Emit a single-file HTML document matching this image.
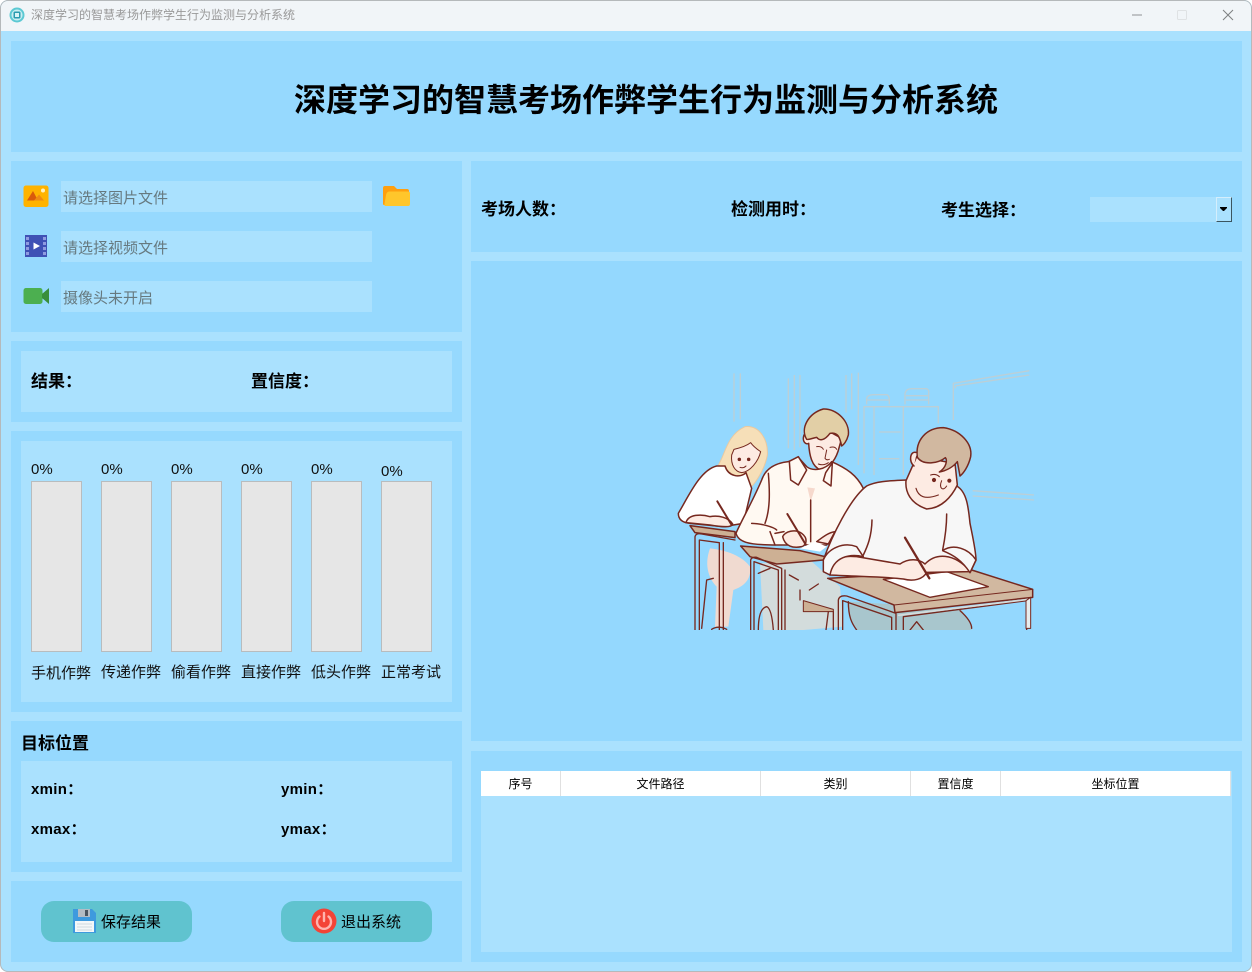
<!DOCTYPE html>
<html lang="zh"><head><meta charset="utf-8"><title>深度学习的智慧考场作弊学生行为监测与分析系统</title>
<style>
html,body{margin:0;padding:0;background:#fff}
body{width:1252px;height:972px;position:relative;overflow:hidden;font-family:"Liberation Sans","Noto Sans CJK SC",sans-serif;color:#000}
#win{position:absolute;left:0;top:0;width:1252px;height:972px;background:#aae1fe;border-radius:8px;overflow:hidden;box-shadow:inset 0 0 0 1px #b5b9bb}
.a{position:absolute}
.p{position:absolute;background:#96d9fe}
.l{position:absolute;background:#aae1fe}
.t{position:absolute;white-space:nowrap;line-height:20px}
.b{font-weight:bold;font-size:17px}
.ph{font-size:15px;color:#66797f}
.bar{position:absolute;top:481px;width:49px;height:169px;background:#e6e6e6;border:1px solid #b8bcbe}
.pct{font-size:15px;color:#111}
.lab{font-size:15px;top:662px;color:#111}
.btn{position:absolute;top:901px;width:151px;height:41px;background:#60c3cf;border-radius:13px}
.th{position:absolute;top:771px;height:25px;line-height:26px;font-size:12px;text-align:center;background:#fff;border-right:1px solid #e0e0e0;box-sizing:border-box}
.x{font-size:15px;font-weight:bold;letter-spacing:.3px}
</style></head><body>
<div id="win">
<div class="a" style="left:1px;top:1px;width:1250px;height:30px;background:#f1f5f8;border-radius:7px 7px 0 0"></div>
<svg class="a" style="left:9px;top:7px" width="16" height="16" viewBox="0 0 16 16"><circle cx="8" cy="8" r="7.500" fill="#5cc9d3"/><circle cx="8" cy="8" r="5.500" fill="#c9eef2"/><rect x="4.500" y="4.500" width="7" height="7" rx="1.500" fill="#2a9bb0"/><rect x="6" y="6" width="4" height="4" fill="#d8f3f6"/></svg>
<div class="t" style="left:31px;top:5px;font-size:12px;color:#999">深度学习的智慧考场作弊学生行为监测与分析系统</div>
<svg class="a" style="left:1125px;top:6px" width="115" height="18" viewBox="0 0 115 18"><path d="M7 9H17" stroke="#8e9193" stroke-width="1"/><rect x="52.500" y="4.500" width="9" height="9" rx="1" fill="none" stroke="#dfe2e4"/><path d="M98 4L108 14M108 4L98 14" stroke="#7d8082" stroke-width="1" fill="none"/></svg>

<div class="p" style="left:11px;top:41px;width:1231px;height:111px"></div>
<div class="t" style="left:294px;top:78px;font-size:32px;line-height:44px;font-weight:bold">深度学习的智慧考场作弊学生行为监测与分析系统</div>

<div class="p" style="left:11px;top:161px;width:451px;height:171px"></div>
<div class="l" style="left:61px;top:181px;width:311px;height:31px"></div>
<div class="l" style="left:61px;top:231px;width:311px;height:31px"></div>
<div class="l" style="left:61px;top:281px;width:311px;height:31px"></div>
<div class="t ph" style="left:63px;top:189px">请选择图片文件</div>
<div class="t ph" style="left:63px;top:239px">请选择视频文件</div>
<div class="t ph" style="left:63px;top:289px">摄像头未开启</div>
<svg class="a" style="left:23px;top:185px" width="26" height="23" viewBox="0 0 26 23"><rect x="0.500" y="0.500" width="25" height="21.500" rx="2.500" fill="#ffb300"/><path d="M4 15.500L10 6L15 15.500Z" fill="#d95a0b"/><path d="M11 15.500L16 9.500L21 15.500Z" fill="#ee8a14"/><circle cx="20" cy="5.500" r="2" fill="#fff3c0"/></svg>
<svg class="a" style="left:25px;top:235px" width="22" height="22" viewBox="0 0 22 22"><rect width="22" height="22" fill="#3f51b5"/><path d="M1 2h3v3H1zM1 7h3v3H1zM1 12h3v3H1zM1 17h3v3H1zM18 2h3v3h-3zM18 7h3v3h-3zM18 12h3v3h-3zM18 17h3v3h-3z" fill="#8f9be0"/><path d="M8.500 7.500L15 11L8.500 14.500Z" fill="#fff"/></svg>
<svg class="a" style="left:23px;top:287px" width="27" height="18" viewBox="0 0 27 18"><rect x="0.500" y="1" width="19" height="16" rx="2.500" fill="#4caf50"/><path d="M19 7L26 1V17L19 11Z" fill="#388e3c"/></svg>
<svg class="a" style="left:383px;top:185px" width="28" height="22" viewBox="0 0 28 22"><path d="M0 3Q0 1 2 1H11L14 4H24Q26 4 26 6V20H1Q0 20 0 19Z" fill="#ff9f0f"/><path d="M2.500 21Q1 21 1.500 19L3 10Q3.500 7 6 6.500H25Q27.500 6.500 27 9.500V19Q27 21 25 21Z" fill="#ffc62b"/></svg>

<div class="p" style="left:11px;top:341px;width:451px;height:81px"></div>
<div class="l" style="left:21px;top:351px;width:431px;height:61px"></div>
<div class="t b" style="left:31px;top:372px">结果：</div>
<div class="t b" style="left:251px;top:372px">置信度：</div>

<div class="p" style="left:11px;top:431px;width:451px;height:281px"></div>
<div class="l" style="left:21px;top:441px;width:431px;height:261px"></div>
<div class="bar" style="left:31px"></div><div class="bar" style="left:101px"></div><div class="bar" style="left:171px"></div><div class="bar" style="left:241px"></div><div class="bar" style="left:311px"></div><div class="bar" style="left:381px"></div>
<div class="t pct" style="left:31px;top:460px">0%</div><div class="t pct" style="left:101px;top:460px">0%</div><div class="t pct" style="left:171px;top:460px">0%</div><div class="t pct" style="left:241px;top:460px">0%</div><div class="t pct" style="left:311px;top:460px">0%</div><div class="t pct" style="left:381px;top:462px">0%</div>
<div class="t lab" style="left:31px;top:664px">手机作弊</div><div class="t lab" style="left:101px;top:663px">传递作弊</div><div class="t lab" style="left:171px;top:663px">偷看作弊</div><div class="t lab" style="left:241px;top:663px">直接作弊</div><div class="t lab" style="left:311px;top:663px">低头作弊</div><div class="t lab" style="left:381px;top:663px">正常考试</div>

<div class="p" style="left:11px;top:721px;width:451px;height:151px"></div>
<div class="l" style="left:21px;top:761px;width:431px;height:101px"></div>
<div class="t" style="left:21px;top:734px;font-size:17px;font-weight:bold">目标位置</div>
<div class="t x" style="left:31px;top:780px">xmin：</div>
<div class="t x" style="left:281px;top:780px">ymin：</div>
<div class="t x" style="left:31px;top:820px">xmax：</div>
<div class="t x" style="left:281px;top:820px">ymax：</div>

<div class="p" style="left:11px;top:881px;width:451px;height:81px"></div>
<div class="btn" style="left:41px"></div><div class="btn" style="left:281px"></div>
<svg class="a" style="left:73px;top:909px" width="23" height="24" viewBox="0 0 23 24"><path d="M0 0H19L23 4V24H0Z" fill="#3e9ade"/><rect x="5" y="0" width="12" height="8" fill="#b4bcc4"/><rect x="12" y="1" width="3" height="6" fill="#4a5560"/><rect x="2" y="12" width="19" height="11" fill="#f4f7f9"/><path d="M4 15H19M4 18H19M4 21H19" stroke="#cfd8de"/></svg>
<svg class="a" style="left:311px;top:908px" width="26" height="26" viewBox="0 0 26 26"><circle cx="13" cy="13" r="12.500" fill="#f44336"/><path d="M8.500 8.500A7 7 0 1 0 17.500 8.500" fill="none" stroke="#ffb3ae" stroke-width="2.400" stroke-linecap="round"/><path d="M13 5V13" stroke="#ffb3ae" stroke-width="2.400" stroke-linecap="round"/></svg>
<div class="t" style="left:101px;top:913px;font-size:15px">保存结果</div>
<div class="t" style="left:341px;top:913px;font-size:15px">退出系统</div>

<div class="p" style="left:471px;top:161px;width:771px;height:91px"></div>
<div class="t b" style="left:481px;top:200px">考场人数：</div>
<div class="t b" style="left:731px;top:200px">检测用时：</div>
<div class="t b" style="left:941px;top:201px">考生选择：</div>
<div class="l" style="left:1090px;top:197px;width:142px;height:25px"></div>
<div class="a" style="left:1216px;top:197px;width:16px;height:25px;box-sizing:border-box;border:1px solid #d4eefc;border-right:1px solid #3a5560;border-bottom:1px solid #3a5560;background:#aae1fe"></div>
<svg class="a" style="left:1220px;top:207px" width="8" height="5" viewBox="0 0 8 5"><path d="M0 0H7V1L4 4H3L0 1Z" fill="#000"/></svg>

<div class="p" style="left:471px;top:261px;width:771px;height:480px;background:#94d8fe"></div>
<svg class="a" style="left:660px;top:360px" width="390" height="280" viewBox="0 0 1170 840">
<defs><clipPath id="c"><rect x="0" y="0" width="1170" height="810"/></clipPath></defs>
<g clip-path="url(#c)">
<g fill="none" stroke="#bccfd6" stroke-width="4">
<path d="M222 40V185M241 40V178M385 55V265M403 45V270M420 45V262M558 45V158M575 40V148M595 38V315"/>
<path d="M612 340V140H835V190M642 345V140M730 345V140M657 216H722M657 296H718"/>
<path d="M620 133V115Q622 105 640 104H680Q688 106 688 120V133M622 120H688M735 133V100Q738 86 755 86H800Q808 90 806 100V133M738 107H806M738 120H806"/>
<path d="M880 180V70L1108 32M886 85V78L1108 45"/>
<path d="M938 392L1122 405M938 408L1122 420"/>
</g>
<g stroke="#76281f" stroke-width="4.500" stroke-linejoin="round" stroke-linecap="round">
<!-- woman -->
<path d="M175 315C195 285 200 225 255 200C295 195 325 235 322 285C315 325 290 365 270 385L200 330Z" fill="#f6dfb8" stroke="#e9c9a0" stroke-width="3"/>
<path d="M222 268C240 264 262 256 272 248C282 262 295 270 302 275C295 305 270 335 245 338C225 335 212 315 215 285Z" fill="#fdebe3" stroke-width="3"/>
<path d="M170 318C120 330 85 410 55 460C55 480 70 488 90 490L190 500L250 490L275 385L258 338C240 355 205 350 195 318Z" fill="#fff"/>
<path d="M78 488C85 462 125 462 150 470C175 465 205 472 218 492C215 505 180 500 150 495Z" fill="#fdebe3"/>
<path d="M172 424L215 495" stroke-width="6"/>
<circle cx="238" cy="298" r="3" fill="#76281f"/><circle cx="266" cy="298" r="3" fill="#76281f"/>
<path d="M240 322Q250 326 258 318" fill="none" stroke-width="3"/>
<path d="M150 565C130 620 150 660 170 680L165 800H205L220 690C250 680 275 660 270 620C250 590 200 570 150 565Z" fill="#f0dad0" stroke="none"/>
<path d="M90 497L225 515V533L105 518Z" fill="#cdb094"/>
<path d="M105 810V530Q108 518 125 522L225 540M118 810V540L178 548V810M190 548V810" fill="none" stroke-width="4"/>
<path d="M125 805L140 660L160 655" fill="none" stroke-width="4"/>
<path d="M155 808Q175 795 200 808" fill="none" stroke-width="4"/>
<!-- man 2 -->
<path d="M432 225C425 245 438 255 446 250C448 285 455 320 482 330C510 325 530 295 538 260L545 235L490 205Z" fill="#fdebe3"/>
<path d="M440 238C420 205 445 160 490 147C530 145 570 185 565 225C560 245 550 255 545 258C540 235 535 215 510 220C495 240 480 245 470 232C455 235 445 240 440 238Z" fill="#e2cfa6"/>
<path d="M470 260Q485 258 490 268M510 262Q525 258 530 268M500 270L495 295Q500 302 508 298M475 312Q490 318 505 308" fill="none" stroke-width="3"/>
<path d="M385 305C340 310 315 330 305 360C280 420 240 490 228 520C235 545 260 555 350 555L500 555L610 385C590 345 560 325 515 305C495 330 460 335 440 320L415 292Z" fill="#fff9f2"/>
<path d="M415 290L388 304L392 360L415 375L440 330ZM517 308L513 378L490 362L497 338Z" fill="#fff9f2"/>
<path d="M442 382L465 385L452 425Z" fill="#f6d9cd" stroke="none"/>
<path d="M452 420V545M325 340C330 400 330 450 315 490M275 490C300 490 340 500 350 510" fill="none"/>
<path d="M330 515L345 555M372 515L345 520" fill="none"/>
<path d="M368 530C375 515 405 505 425 520C445 535 440 555 425 560C400 565 375 560 368 530Z" fill="#fdebe3"/>
<path d="M470 545C490 530 505 518 525 515L505 552Z" fill="#fdebe3"/>
<path d="M382 462L438 555" stroke-width="6"/>
<path d="M420 565L465 545L500 560L480 575Z" fill="#fff" stroke="none"/>
<path d="M300 610L310 810H405L430 810L550 800L540 680L450 600Z" fill="#d3dcdc" stroke="none"/>
<path d="M242 558L420 572L495 590L490 600L350 612L270 590Z" fill="#cdb094"/>
<path d="M272 810V600Q275 590 290 592L365 625V810M282 810V605L355 630V810" fill="none" stroke-width="4"/>
<path d="M375 810V630M295 640L330 625" fill="none" stroke-width="4"/>
<path d="M388 645L415 660M448 690L475 672M420 690V720" fill="none" stroke-width="4"/>
<path d="M430 722L520 748V755L430 755Z" fill="#cdb094" stroke-width="3"/>
<path d="M505 755L498 810M520 755V810M295 810Q295 745 320 740Q335 745 340 810" fill="none" stroke-width="4"/>
<!-- man 3 -->
<path d="M565 725C565 770 575 790 590 810H935C930 785 915 760 900 745Z" fill="#a8c6cd" stroke="none"/>
<path d="M565 725C565 770 575 790 590 810M900 752C920 770 935 790 935 805M750 810L770 785L790 810" fill="none" stroke-width="4"/>
<path d="M490 600C515 530 570 415 620 378C650 362 700 362 738 360L890 378C920 395 925 440 930 490C940 540 948 575 948 600L930 638L610 620Z" fill="#f7f7f7"/>
<path d="M738 362C735 395 750 430 800 447C845 445 875 410 892 375L885 310L770 290Z" fill="#fdebe3"/>
<path d="M772 292C765 240 800 203 850 203C900 210 938 250 932 290C925 320 910 340 900 348L892 305C880 320 860 332 838 336C860 322 862 300 856 293C835 310 790 318 772 292Z" fill="#d1b8a0"/>
<path d="M770 278C750 270 745 305 762 318" fill="#fdebe3"/>
<path d="M768 385C775 410 795 420 835 405M812 345Q828 340 838 350" fill="none" stroke-width="3.500"/>
<circle cx="822" cy="360" r="4" fill="#76281f"/><circle cx="868" cy="362" r="4" fill="#76281f"/>
<path d="M845 362C835 385 850 395 860 378" fill="none" stroke-width="3"/>
<path d="M636 480C635 530 622 560 610 585M860 462C860 500 855 535 848 570" fill="none"/>
<path d="M503 655L935 630L1118 688V712L705 758L702 735Z" fill="#d1b8a0"/>
<path d="M702 735L1118 688" fill="none" stroke-width="3"/>
<path d="M670 658L860 635L985 680L810 712Z" fill="#fff" stroke-width="4"/>
<path d="M510 645C505 600 535 585 590 590L720 612C745 595 775 595 795 612C825 580 880 575 932 635L800 637C790 658 760 665 730 657C680 650 600 650 510 645Z" fill="#fdebe3"/>
<path d="M490 600C505 565 550 545 590 560L610 590C570 580 520 590 510 645L490 635Z" fill="#f7f7f7"/>
<path d="M848 572C880 550 925 565 948 600L930 638C905 600 880 585 848 572Z" fill="#f7f7f7"/>
<path d="M735 533L808 655" stroke-width="7"/>
<path d="M535 810V720Q538 705 560 708L708 760V810M548 810V722L695 772V810" fill="none" stroke-width="4"/>
<path d="M730 810V770L1100 722V810" fill="none" stroke-width="4"/>
<path d="M716 766L1105 718" stroke="#d5dcdc" stroke-width="5" fill="none"/>
<path d="M1098 722L1112 712V805H1098Z" fill="#e8eded" stroke-width="3"/>
</g>
</g>
</svg>

<div class="p" style="left:471px;top:751px;width:771px;height:211px"></div>
<div class="l" style="left:481px;top:771px;width:751px;height:181px"></div>
<div class="th" style="left:481px;width:80px">序号</div>
<div class="th" style="left:561px;width:200px">文件路径</div>
<div class="th" style="left:761px;width:150px">类别</div>
<div class="th" style="left:911px;width:90px">置信度</div>
<div class="th" style="left:1001px;width:230px">坐标位置</div>
</div>
</body></html>
